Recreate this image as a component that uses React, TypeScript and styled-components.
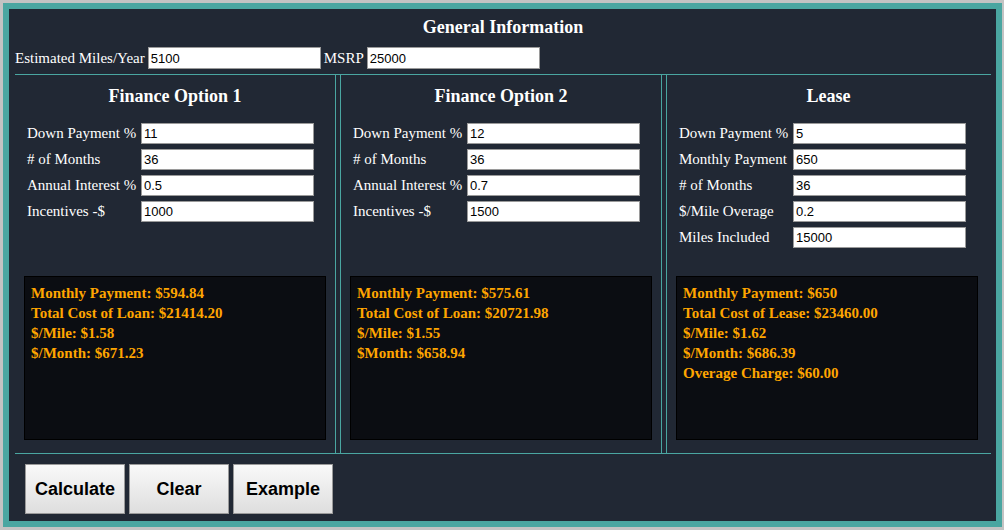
import React from "react";
import styled, { createGlobalStyle } from "styled-components";

const GlobalStyle = createGlobalStyle`
	html, body {
		margin: 0;
		background: #c3c3c3;
	}
	body {
		padding: 3px 0 0 3px;
	}
`;

const Frame = styled.div`
	width: 999px;
	height: 524px;
	box-sizing: border-box;
	border: 6px solid #4aa6a1;
	background: #212834;
	padding: 0 5px 0 6px;
	font-family: "Liberation Serif", "Times New Roman", serif;
	color: #ffffff;
`;

const Title = styled.h1`
	margin: 0;
	padding-top: 7px;
	font-size: 18px;
	line-height: 22px;
	font-weight: bold;
	text-align: center;
`;

const TopRow = styled.div`
	display: flex;
	align-items: center;
	gap: 3px;
	margin-top: 9px;
	height: 22px;
	font-size: 15px;
`;

const TextInput = styled.input<{ $h?: number }>`
	box-sizing: border-box;
	width: 173px;
	height: ${(p) => p.$h ?? 22}px;
	margin: 0;
	padding: 0 2px;
	border: 1px solid #9a9a9a;
	background: #ffffff;
	color: #000000;
	font-family: "Liberation Sans", Arial, sans-serif;
	font-size: 13px;
	outline: none;
`;

const Columns = styled.div`
	margin-top: 5px;
	display: grid;
	grid-template-columns: 321px 322px 324px;
	column-gap: 4px;
	border-top: 1px solid #4aa6a1;
	border-bottom: 1px solid #4aa6a1;
`;

const Column = styled.section<{ $left?: boolean; $right?: boolean }>`
	display: flex;
	flex-direction: column;
	padding-top: 10px;
	border-left: ${(p) => (p.$left ? "1px solid #4aa6a1" : "none")};
	border-right: ${(p) => (p.$right ? "1px solid #4aa6a1" : "none")};
`;

const ColumnTitle = styled.h2`
	margin: 0;
	font-size: 18px;
	line-height: 22px;
	font-weight: bold;
	text-align: center;
`;

const Form = styled.div`
	margin-top: 16px;
	height: 153px;
	padding-left: 12px;
	display: flex;
	flex-direction: column;
	gap: 5px;
`;

const FieldRow = styled.label`
	display: flex;
	align-items: center;
	height: 21px;
	font-size: 15px;
`;

const FieldLabel = styled.span`
	width: 114px;
	white-space: nowrap;
`;

const ResultBox = styled.div`
	box-sizing: border-box;
	width: 302px;
	height: 164px;
	margin: 0 0 13px 9px;
	padding: 6px 6px;
	border: 1px solid #000000;
	background: #0b0d12;
	color: #ffa500;
	font-size: 15px;
	line-height: 20px;
	font-weight: bold;
`;

const ButtonRow = styled.div`
	display: flex;
	gap: 4px;
	padding: 10px 0 0 10px;
`;

const Button = styled.button`
	width: 100px;
	height: 50px;
	margin: 0;
	border: 1px solid #9a9a9a;
	background: linear-gradient(#f9f9f9, #dedede);
	color: #000000;
	font-family: "Liberation Sans", Arial, sans-serif;
	font-size: 18px;
	font-weight: bold;
	cursor: pointer;
`;

interface Option {
	title: string;
	fields: [string, string][];
	results: string[];
	left?: boolean;
	right?: boolean;
}

const options: Option[] = [
	{
		title: "Finance Option 1",
		right: true,
		fields: [
			["Down Payment %", "11"],
			["# of Months", "36"],
			["Annual Interest %", "0.5"],
			["Incentives -$", "1000"],
		],
		results: ["Monthly Payment: $594.84", "Total Cost of Loan: $21414.20", "$/Mile: $1.58", "$/Month: $671.23"],
	},
	{
		title: "Finance Option 2",
		left: true,
		right: true,
		fields: [
			["Down Payment %", "12"],
			["# of Months", "36"],
			["Annual Interest %", "0.7"],
			["Incentives -$", "1500"],
		],
		results: ["Monthly Payment: $575.61", "Total Cost of Loan: $20721.98", "$/Mile: $1.55", "$Month: $658.94"],
	},
	{
		title: "Lease",
		left: true,
		fields: [
			["Down Payment %", "5"],
			["Monthly Payment", "650"],
			["# of Months", "36"],
			["$/Mile Overage", "0.2"],
			["Miles Included", "15000"],
		],
		results: [
			"Monthly Payment: $650",
			"Total Cost of Lease: $23460.00",
			"$/Mile: $1.62",
			"$/Month: $686.39",
			"Overage Charge: $60.00",
		],
	},
];

export default function App() {
	return (
		<>
			<GlobalStyle />
			<Frame>
				<Title>General Information</Title>
				<TopRow>
					<span>Estimated Miles/Year</span>
					<TextInput defaultValue="5100" />
					<span>MSRP</span>
					<TextInput defaultValue="25000" />
				</TopRow>

				<Columns>
					{options.map((opt) => (
						<Column key={opt.title} $left={opt.left} $right={opt.right}>
							<ColumnTitle>{opt.title}</ColumnTitle>
							<Form>
								{opt.fields.map(([label, value]) => (
									<FieldRow key={label}>
										<FieldLabel>{label}</FieldLabel>
										<TextInput $h={21} defaultValue={value} />
									</FieldRow>
								))}
							</Form>
							<ResultBox>
								{opt.results.map((r) => (
									<div key={r}>{r}</div>
								))}
							</ResultBox>
						</Column>
					))}
				</Columns>

				<ButtonRow>
					<Button>Calculate</Button>
					<Button>Clear</Button>
					<Button>Example</Button>
				</ButtonRow>
			</Frame>
		</>
	);
}
